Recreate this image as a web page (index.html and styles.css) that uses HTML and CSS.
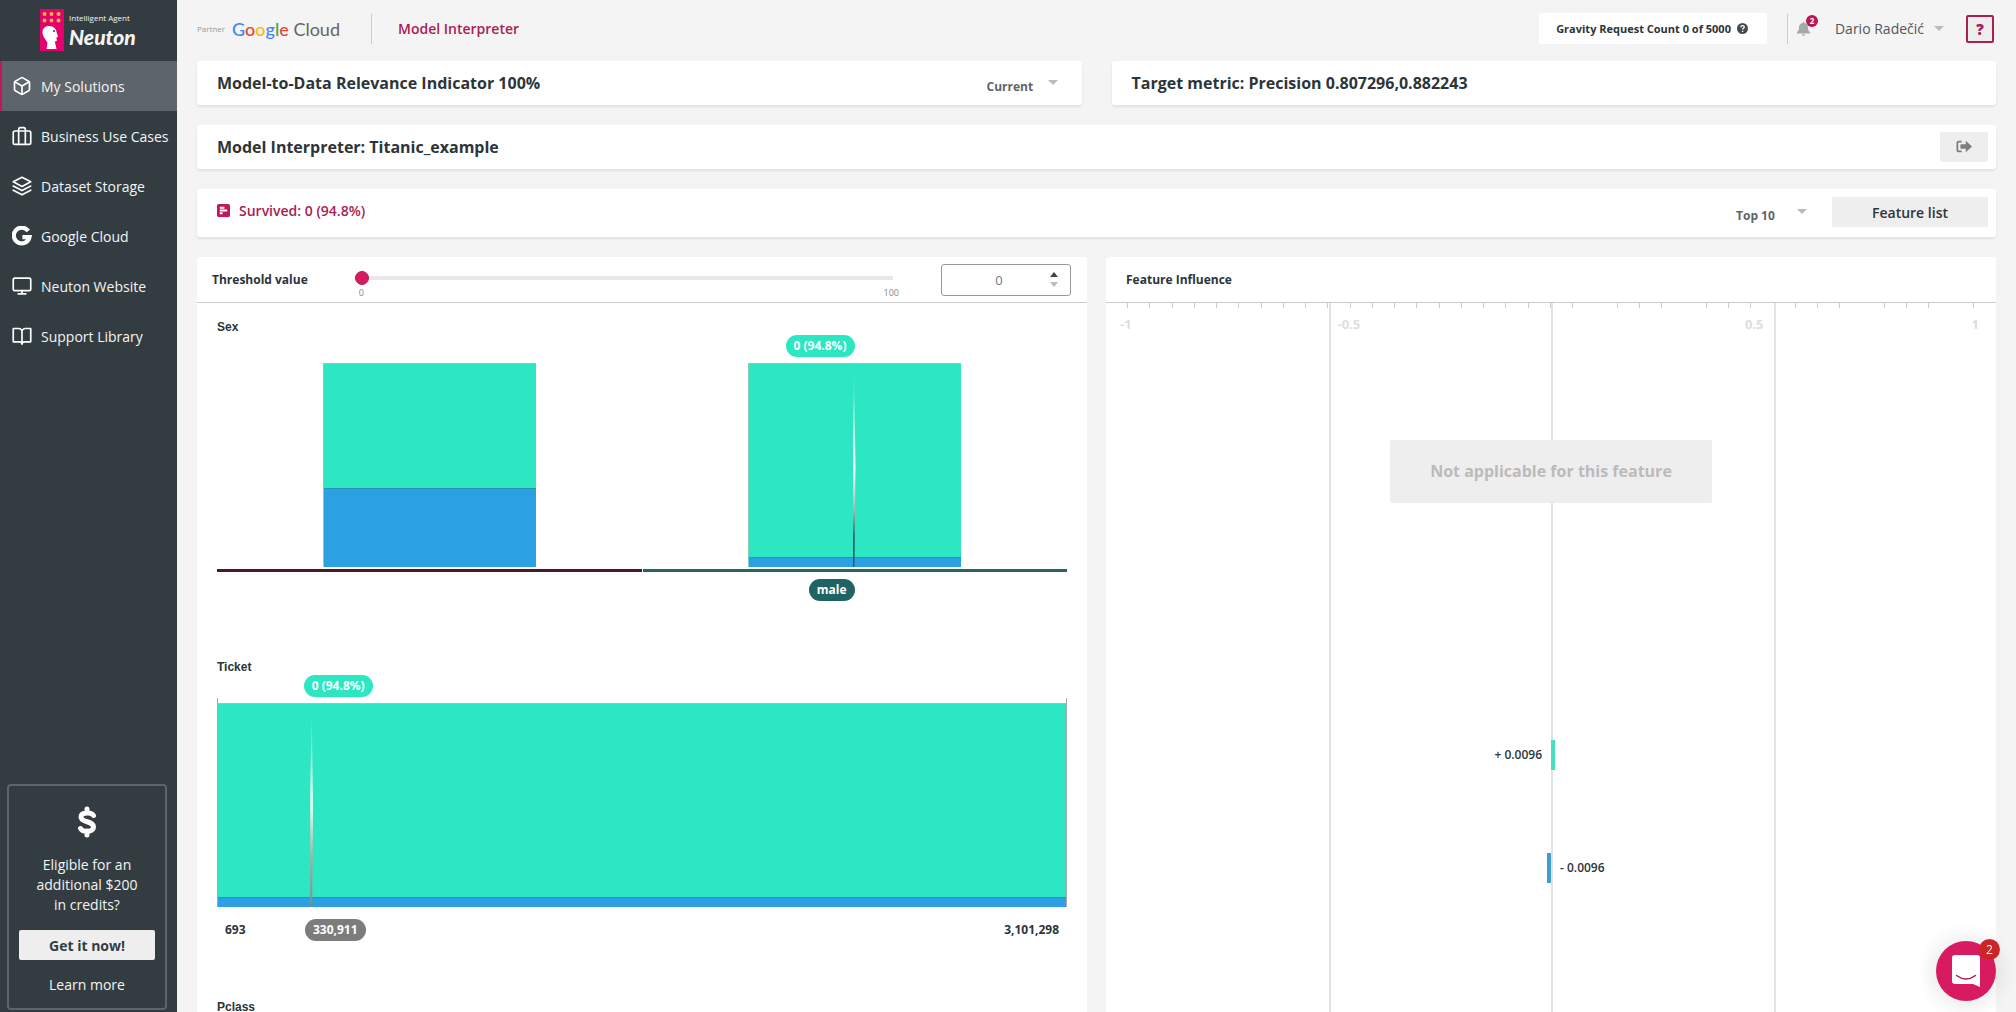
FILE: index.html
```
<!DOCTYPE html>
<html lang="en">
<head>
  <meta charset="UTF-8">
  <meta name="viewport" content="width=device-width, initial-scale=1.0">
  <title>Neuton - Model Interpreter</title>
  <link rel="stylesheet" href="styles.css">
</head>
<body>

<aside class="sidebar">
  <a class="brand" href="#">
    <svg class="brand-mark" viewBox="0 0 24 42">
      <rect width="24" height="42" fill="#e5006d"/>
      <g fill="#f0b93a">
        <circle cx="4.5" cy="5" r="2"/><circle cx="11.500" cy="5" r="2"/><circle cx="18.500" cy="5" r="2"/>
        <circle cx="4.5" cy="11.500" r="2"/><circle cx="11.500" cy="11.500" r="2"/><circle cx="18.500" cy="11.500" r="2"/>
      </g>
      <path fill="#fff" d="M2.500 23C3 17.500 8 16 12 17.500c3 1.200 4.500 3.500 4.500 5.500L18 27.500l-1.500 1 .3 3.500-2 .5 1.700 7.500H6.500l1-6C6.500 31 2.500 28 2.500 23z"/>
      <circle cx="14" cy="22" r="1" fill="#333d41"/>
    </svg>
    <span class="brand-text">
      <span class="brand-sub">Intelligent Agent</span>
      <span class="brand-name">Neuton</span>
    </span>
  </a>

  <nav class="menu">
    <a class="active" href="#">
      <svg viewBox="0 0 24 24"><path d="M21 16V8a2 2 0 0 0-1-1.730l-7-4a2 2 0 0 0-2 0l-7 4A2 2 0 0 0 3 8v8a2 2 0 0 0 1 1.730l7 4a2 2 0 0 0 2 0l7-4A2 2 0 0 0 21 16z"/><path d="M3.300 7 12 12l8.700-5M12 22V12"/></svg>
      My Solutions
    </a>
    <a href="#">
      <svg viewBox="0 0 24 24"><rect x="1.500" y="6" width="21" height="16" rx="2"/><path d="M8 22V4a2 2 0 0 1 2-2h4a2 2 0 0 1 2 2v18"/></svg>
      Business Use Cases
    </a>
    <a href="#">
      <svg viewBox="0 0 24 24"><path d="M12 1.500 1.500 7 12 12.500 22.500 7zM1.500 17 12 22.500 22.500 17M1.500 12 12 17.500 22.500 12"/></svg>
      Dataset Storage
    </a>
    <a href="#">
      <svg class="google" viewBox="0 0 24 24"><path d="M19.500 6A9.500 9.500 0 1 0 21 13.300h-8.500"/></svg>
      Google Cloud
    </a>
    <a href="#">
      <svg viewBox="0 0 24 24"><rect x="1.500" y="2.500" width="21" height="15" rx="2"/><path d="M7.500 21.500h9M12 17.500v4"/></svg>
      Neuton Website
    </a>
    <a href="#">
      <svg viewBox="0 0 24 24"><path d="M1.500 3H8a4 4 0 0 1 4 4v15a3 3 0 0 0-3-3H1.500zM22.500 3H16a4 4 0 0 0-4 4v15a3 3 0 0 1 3-3h7.500z"/></svg>
      Support Library
    </a>
  </nav>

  <div class="promo">
    <svg viewBox="0 0 20 32"><path d="M16.500 9.500C15 6.500 4 5.500 4 11c0 6 12.500 3.500 12.500 10 0 5.500-11 5.500-13 1.500M10 3v4M10 25v4"/></svg>
    <p>Eligible for an additional $200 in credits?</p>
    <button type="button">Get it now!</button>
    <a href="#">Learn more</a>
  </div>
</aside>

<main class="page">
  <header class="topbar">
    <div class="partner">
      <span>Partner</span>
      <span class="gcloud"><b class="g-blue">G</b><b class="g-red">o</b><b class="g-yellow">o</b><b class="g-blue">g</b><b class="g-green">l</b><b class="g-red">e</b> Cloud</span>
    </div>
    <h1>Model Interpreter</h1>
    <div class="requests">
      Gravity Request Count 0 of 5000
      <svg viewBox="0 0 16 16"><circle cx="8" cy="8" r="8" fill="#444b50"/><path d="M5.500 6.200C5.700 3 10.700 3.200 10.500 6.100 10.400 7.600 8.200 7.800 8.200 9.400" fill="none" stroke="#fff" stroke-width="2"/><circle cx="8.200" cy="12" r="1.200" fill="#fff"/></svg>
    </div>
    <div class="account">
      <button class="bell" type="button" aria-label="Notifications">
        <svg viewBox="0 0 16 18"><path fill="#a5a9ab" d="M8 1a1.200 1.200 0 0 1 1.200 1.200C12 2.800 13.500 5 13.500 7.500c0 3.500 1 4.800 2.500 6V15H0v-1.500c1.500-1.200 2.500-2.500 2.500-6C2.500 5 4 2.800 6.800 2.200A1.200 1.200 0 0 1 8 1zM6 16h4a2 2 0 0 1-4 0z"/></svg>
        <span class="bell-count">2</span>
      </button>
      <button class="user" type="button">Dario Radečić <i class="caret"></i></button>
      <button class="help" type="button">?</button>
    </div>
  </header>

  <div class="pair">
    <section class="card">
      <h2>Model-to-Data Relevance Indicator 100%</h2>
      <div class="pick">
        <select aria-label="Model version"><option>Current</option></select>
        <i class="caret"></i>
      </div>
    </section>
    <section class="card">
      <h2>Target metric: Precision 0.807296,0.882243</h2>
    </section>
  </div>

  <section class="card">
    <h2>Model Interpreter: Titanic_example</h2>
    <button class="btn btn-exit" type="button" aria-label="Exit">
      <svg viewBox="0 0 18 14"><path d="M6.500 1.500H3A1.500 1.500 0 0 0 1.500 3v8A1.500 1.500 0 0 0 3 12.500h3.500" fill="none" stroke="#7c7f81" stroke-width="2"/><path fill="#7c7f81" d="M5 4.500h6V.5L18 7l-7 6.500v-4H5z"/></svg>
    </button>
  </section>

  <section class="card card-result">
    <h3>
      <svg viewBox="0 0 14 14"><rect width="14" height="14" rx="2" fill="#c2185b"/><path d="M3 4h5M3 7h8M3 10h3" stroke="#fff" stroke-width="2"/></svg>
      Survived: 0 (94.8%)
    </h3>
    <div class="pick">
      <select aria-label="Number of features"><option>Top 10</option></select>
      <i class="caret"></i>
    </div>
    <button class="btn btn-list" type="button">Feature list</button>
  </section>

  <div class="board">
    <section class="panel">
      <div class="panel-head">
        <label for="threshold">Threshold value</label>
        <div class="slider">
          <input type="range" id="threshold" min="0" max="100" value="0">
          <div class="slider-ends"><span>0</span><span>100</span></div>
        </div>
        <div class="stepper">
          <input type="text" id="threshold-value" value="0" aria-label="Threshold value">
          <div class="stepper-btns">
            <button type="button" aria-label="Increase"></button>
            <button class="down" type="button" aria-label="Decrease" disabled></button>
          </div>
        </div>
      </div>

      <article class="feature">
        <h4>Sex</h4>
        <div class="pin pin-end" style="width: 75%"><span class="pill">0 (94.8%)</span></div>
        <div class="plot plot-bars">
          <div class="stack"><i style="height: 39%"></i></div>
          <div class="stack"><i style="height: 5%"></i></div>
          <span class="needle" style="left: 75%"></span>
        </div>
        <div class="classes"><i class="female"></i><i class="male"></i></div>
        <div class="pin pin-end" style="width: 75%"><span class="pill pill-male">male</span></div>
      </article>

      <article class="feature">
        <h4>Ticket</h4>
        <div class="pin" style="margin-left: 10.2%"><span class="pill">0 (94.8%)</span></div>
        <div class="plot plot-range">
          <div class="stack"><i style="height: 5%"></i></div>
          <span class="needle needle-grey" style="left: 11.2%"></span>
        </div>
        <div class="range">
          <span>693</span>
          <span class="pill pill-grey">330,911</span>
          <span>3,101,298</span>
        </div>
      </article>

      <article class="feature">
        <h4>Pclass</h4>
      </article>
    </section>

    <section class="panel">
      <div class="panel-head"><h3>Feature Influence</h3></div>
      <div class="influence">
        <div class="scale">
          <span>-1</span>
          <span>-0.5</span>
          <span>0.5</span>
          <span>1</span>
        </div>
        <div class="effect"><p class="empty">Not applicable for this feature</p></div>
        <div class="effect">
          <div class="value">
            <span>+ 0.0096</span>
            <i class="plus"><b style="width: 0.96%"></b></i>
          </div>
          <div class="value">
            <i class="minus"><b style="width: 0.96%"></b></i>
            <span>- 0.0096</span>
          </div>
        </div>
      </div>
    </section>
  </div>
</main>

<button class="chat" type="button" aria-label="Open chat">
  <svg viewBox="0 0 28 32"><path fill="#fff" d="M3 0h22a3 3 0 0 1 3 3v29l-7-3H3a3 3 0 0 1-3-3V3a3 3 0 0 1 3-3z"/><path d="M4.500 20.500q9.500 7 19 0" fill="none" stroke="#b0164f" stroke-width="1.500" stroke-linecap="round"/></svg>
  <span class="chat-count">2</span>
</button>

<script>
  const slider = document.getElementById("threshold");
  const box = document.getElementById("threshold-value");
  const steps = document.querySelectorAll(".stepper-btns button");

  function setThreshold(val) {
    const num = Math.min(Math.max(parseInt(val) || 0, 0), 100);
    slider.value = num;
    box.value = num;
    steps[0].disabled = num === 100;
    steps[1].disabled = num === 0;
  }

  slider.addEventListener("input", () => setThreshold(slider.value));
  box.addEventListener("change", () => setThreshold(box.value));
  steps[0].addEventListener("click", () => setThreshold(+slider.value + 1));
  steps[1].addEventListener("click", () => setThreshold(+slider.value - 1));
</script>

</body>
</html>
```
FILE: styles.css
```
* { box-sizing: border-box; }
html, body { height: 100%; margin: 0; }
body {
  display: flex;
  background: #f4f4f4;
  color: #2c3539;
  font-family: "Open Sans", "Noto Sans", sans-serif;
  font-size: 14px;
  overflow: hidden;
}
h1, h2, h3, h4, p { margin: 0; }
a { color: inherit; text-decoration: none; }
button, select, input { font-family: inherit; color: inherit; }
button { border: none; padding: 0; cursor: pointer; }

/* sidebar */
.sidebar {
  display: flex;
  flex-direction: column;
  flex: 0 0 177px;
  background: #333d41;
  color: #f4f4f4;
}
.brand {
  display: flex;
  gap: 5px;
  height: 61px;
  padding: 9px 0 0 40px;
}
.brand-mark { width: 24px; height: 42px; }
.brand-text { display: flex; flex-direction: column; }
.brand-sub { font-size: 8px; line-height: 18px; white-space: nowrap; }
.brand-name {
  font-family: Lato, sans-serif;
  font-size: 21px;
  font-style: italic;
  font-weight: 900;
  line-height: 20px;
}
.menu a {
  display: flex;
  align-items: center;
  gap: 9px;
  height: 50px;
  padding-left: 12px;
  white-space: nowrap;
}
.menu a.active {
  background: #5e656a;
  box-shadow: inset 2px 0 #c2185b;
}
.menu svg {
  width: 20px;
  height: 20px;
  fill: none;
  stroke: #fff;
  stroke-width: 2;
  stroke-linejoin: round;
  stroke-linecap: round;
}
.menu .google { stroke-width: 5; stroke-linecap: butt; stroke-linejoin: miter; }
.promo {
  display: flex;
  flex-direction: column;
  align-items: center;
  margin: auto 10px 2px 7px;
  padding: 20px 10px 13px;
  border: 2px solid #5e656a;
  border-radius: 4px;
  text-align: center;
  line-height: 20px;
}
.promo svg {
  width: 20px;
  height: 32px;
  margin-bottom: 17px;
  fill: none;
  stroke: #fff;
  stroke-width: 5;
  stroke-linecap: round;
}
.promo p { width: 112px; }
.promo button {
  width: 100%;
  height: 30px;
  margin: 15px 0;
  background: #eee;
  border-radius: 2px;
  color: #333d41;
  font-size: 14px;
  font-weight: 700;
}

/* page */
.page {
  display: flex;
  flex-direction: column;
  gap: 20px;
  flex: 1;
  min-width: 0;
  padding: 0 20px;
}
.topbar {
  display: flex;
  align-items: center;
  height: 61px;
  padding-bottom: 4px;
  margin-bottom: -20px;
}
.partner {
  display: flex;
  align-items: center;
  gap: 7px;
  height: 30px;
  padding-right: 31px;
  border-right: 1px solid #ccc;
  color: #999;
  font-size: 8px;
}
.gcloud {
  font-family: Lato, sans-serif;
  font-size: 18px;
  color: #666;
}
.gcloud b { font-weight: 500; }
.g-blue { color: #4285f4; }
.g-red { color: #ea4335; }
.g-yellow { color: #fbbc05; }
.g-green { color: #34a853; }
.topbar h1 {
  padding-left: 26px;
  color: #a92054;
  font-size: 14px;
  font-weight: 600;
}
.requests {
  display: flex;
  align-items: center;
  gap: 6px;
  height: 31px;
  margin-left: auto;
  padding: 0 19px 0 17px;
  background: #fff;
  border-radius: 3px;
  font-size: 11px;
  font-weight: 700;
}
.requests svg { width: 11px; height: 11px; }
.account {
  display: flex;
  align-items: center;
  height: 30px;
  margin-left: 20px;
  border-left: 1px solid #ccc;
}
.bell {
  position: relative;
  width: 32px;
  height: 30px;
  margin-left: 9px;
  background: none;
  text-align: left;
}
.bell svg { display: block; width: 13px; height: 15px; }
.bell-count {
  position: absolute;
  top: 1px;
  left: 9px;
  width: 12px;
  height: 12px;
  border-radius: 50%;
  background: #b8174f;
  color: #fff;
  font-size: 8px;
  font-weight: 700;
  line-height: 12px;
  text-align: center;
}
.user {
  display: flex;
  align-items: center;
  gap: 10px;
  margin: 0 22px 0 6px;
  background: none;
  color: #555;
  font-size: 14px;
}
.caret {
  border: 5px solid transparent;
  border-top-color: #bbb;
  border-bottom: 0;
}
.help {
  width: 28px;
  height: 28px;
  margin-right: 2px;
  background: #eee;
  border: 2px solid #a92054;
  border-radius: 2px;
  color: #a92054;
  font-size: 15px;
  font-weight: 800;
  line-height: 20px;
}

.pair {
  display: grid;
  grid-template-columns: 1fr 1fr;
  gap: 30px;
}
.card {
  display: flex;
  align-items: center;
  justify-content: space-between;
  height: 44px;
  padding: 0 8px 0 20px;
  background: #fff;
  border-radius: 3px;
  box-shadow: 0 2px 3px rgba(0, 0, 0, 0.08);
}
.card h2 { font-size: 16px; font-weight: 700; }
.card h3 {
  display: flex;
  align-items: center;
  gap: 9px;
  margin-right: auto;
  padding-bottom: 4px;
  color: #a92054;
  font-size: 14px;
  font-weight: 600;
}
.card h3 svg { width: 13px; height: 13px; }
.card-result { height: 48px; padding-bottom: 2px; }
.pick { position: relative; margin: 4px 16px 0 0; }
.pick select {
  appearance: none;
  width: 71px;
  border: none;
  background: none;
  color: #5e656a;
  font-size: 12px;
  font-weight: 700;
}
.pick .caret { position: absolute; top: 4px; right: 0; pointer-events: none; }
.card-result .pick { margin-right: 25px; }
.btn {
  height: 30px;
  background: #eee;
  border-radius: 2px;
  font-size: 14px;
  font-weight: 600;
}
.btn-exit { width: 48px; }
.btn-exit svg { width: 16px; height: 13px; }
.btn-list { width: 156px; }

/* board */
.board {
  display: grid;
  grid-template-columns: 1fr 1fr;
  gap: 19px;
  flex: 1;
  min-height: 0;
}
.panel {
  display: flex;
  flex-direction: column;
  min-height: 0;
  background: #fff;
  border-radius: 3px 3px 0 0;
  overflow: hidden;
}
.panel-head {
  display: flex;
  align-items: center;
  flex: 0 0 46px;
  padding: 0 16px 0 15px;
  border-bottom: 1px solid #ccc;
  font-size: 12px;
  font-weight: 700;
}
.panel-head h3 { padding-left: 5px; font-size: 12px; }
.slider { flex: 1; margin: 0 48px 0 47px; }
.slider input {
  appearance: none;
  display: block;
  width: 100%;
  height: 14px;
  margin: 11px 0 0;
  background: linear-gradient(#e8e8ea, #e8e8ea) center / 100% 4px no-repeat;
}
.slider input::-webkit-slider-thumb {
  appearance: none;
  width: 14px;
  height: 14px;
  border: 1px solid #a92054;
  border-radius: 50%;
  background: #d81b60;
}
.slider-ends {
  display: flex;
  justify-content: space-between;
  margin: 2px -6px 0 4px;
  color: #888;
  font-size: 9px;
  font-weight: 400;
  line-height: 12px;
}
.stepper {
  display: flex;
  width: 130px;
  height: 32px;
  border: 1px solid #999;
  border-radius: 3px;
}
.stepper input {
  flex: 1;
  min-width: 0;
  padding: 0 0 0 6px;
  border: none;
  background: none;
  color: #777;
  font-size: 13px;
  text-align: center;
}
.stepper-btns {
  display: flex;
  flex-direction: column;
  justify-content: center;
  gap: 5px;
  padding-right: 12px;
}
.stepper-btns button {
  width: 8px;
  height: 5px;
  background: #444;
  clip-path: polygon(50% 0, 100% 100%, 0 100%);
}
.stepper-btns .down { clip-path: polygon(0 0, 100% 0, 50% 100%); }
.stepper-btns button:disabled { background: #bbb; }

.feature {
  flex: 0 0 340px;
  padding: 17px 20px 0;
  font-size: 12px;
}
.feature h4 {
  font-family: "Liberation Sans", Arial, sans-serif;
  font-size: 12px;
  line-height: 14px;
  padding-bottom: 1px;
}
.pin { display: flex; height: 23px; }
.pin-end { justify-content: flex-end; }
.pill {
  height: 22px;
  padding: 0 8px;
  border-radius: 11px;
  background: #2de6c2;
  color: #fff;
  font-weight: 700;
  line-height: 22px;
}
.pill-male { background: #1f6465; }
.pill-grey { background: #7c7c7c; }
.plot {
  position: relative;
  display: flex;
  height: 204px;
  margin-top: 5px;
}
.plot-bars { justify-content: space-around; }
.plot-bars .stack { width: 25%; }
.plot-range .stack { width: 100%; }
.plot-range::before, .plot-range::after {
  content: "";
  position: absolute;
  top: -5px;
  bottom: 0;
  left: 0;
  width: 1px;
  background: #a5a9ab;
}
.plot-range::after { left: auto; right: 0; }
.stack {
  display: flex;
  align-items: flex-end;
  background: #2de6c2;
  border-top: 1px solid #7fd0bd;
  border-left: 1px solid #7fd0bd;
}
.stack i {
  width: 100%;
  background: #2ba1e3;
  border-top: 1px solid #2793b5;
}
.needle {
  position: absolute;
  top: 4px;
  bottom: 0;
  width: 3px;
  margin-left: -2px;
  background: linear-gradient(transparent, #fff 50%, #a5b5b0 72%, #1f6465 86%, #1f6465);
  clip-path: polygon(50% 0, 100% 50%, 66% 100%, 0 100%, 0 40%);
}
.needle-grey { background: linear-gradient(transparent, #dffaf4 50%, #9fb5ae 75%, #7c8c8c); }
.classes { display: flex; gap: 1px; margin: 2px 0 7px; }
.classes i { flex: 1; height: 3px; }
.female { background: #4a1a22; }
.male { background: #2b6365; }
.range {
  display: grid;
  grid-template-columns: 80px 1fr auto;
  justify-items: start;
  margin-top: 12px;
  padding: 0 8px;
  font-weight: 700;
  line-height: 22px;
}

/* influence chart */
.influence { position: relative; flex: 1; }
.influence::before {
  content: "";
  display: block;
  height: 5px;
  margin-bottom: -5px;
  background: repeating-linear-gradient(to right, transparent 0, transparent calc(2.5% - 1px), #ccc calc(2.5% - 1px), #ccc 2.5%);
  clip-path: inset(0 3px 0 0);
}
.scale {
  position: absolute;
  inset: 0;
  display: grid;
  grid-template-columns: repeat(4, 1fr);
  color: #dedede;
  font-size: 13px;
  font-weight: 700;
}
.scale span {
  padding: 12px 10px 0 7px;
  border-left: 2px solid #e3e3e3;
}
.scale span:first-child { padding-left: 14px; border-left: 0; }
.scale span:nth-child(n+3) { text-align: right; }
.scale span:last-child { padding-right: 17px; }
.effect {
  position: relative;
  display: flex;
  flex-direction: column;
  gap: 83px;
  height: 340px;
  padding-top: 97px;
}
.empty {
  align-self: center;
  margin-top: 40px;
  padding: 0 40px;
  background: #eee;
  border-radius: 2px;
  color: #bbb;
  font-size: 16px;
  font-weight: 700;
  line-height: 63px;
}
.value {
  display: grid;
  grid-template-columns: 1fr 1fr;
  height: 30px;
  font-size: 12px;
  font-weight: 600;
  line-height: 30px;
}
.value span { padding: 0 9px; }
.value span:first-child { text-align: right; }
.value i { display: flex; }
.plus b { background: #45dfc0; }
.minus { justify-content: flex-end; }
.minus b { background: #3f9bd3; }

/* chat launcher */
.chat {
  position: fixed;
  right: 20px;
  bottom: 11px;
  display: flex;
  align-items: center;
  justify-content: center;
  width: 60px;
  height: 60px;
  border-radius: 50%;
  background: #d81b60;
  box-shadow: 0 1px 18px 6px rgba(0, 0, 0, 0.08);
}
.chat svg { width: 28px; height: 32px; }
.chat-count {
  position: absolute;
  top: -2px;
  right: -4px;
  width: 21px;
  height: 21px;
  border-radius: 50%;
  background: #cc2529;
  color: #fff;
  font-size: 12px;
  line-height: 21px;
}
```
